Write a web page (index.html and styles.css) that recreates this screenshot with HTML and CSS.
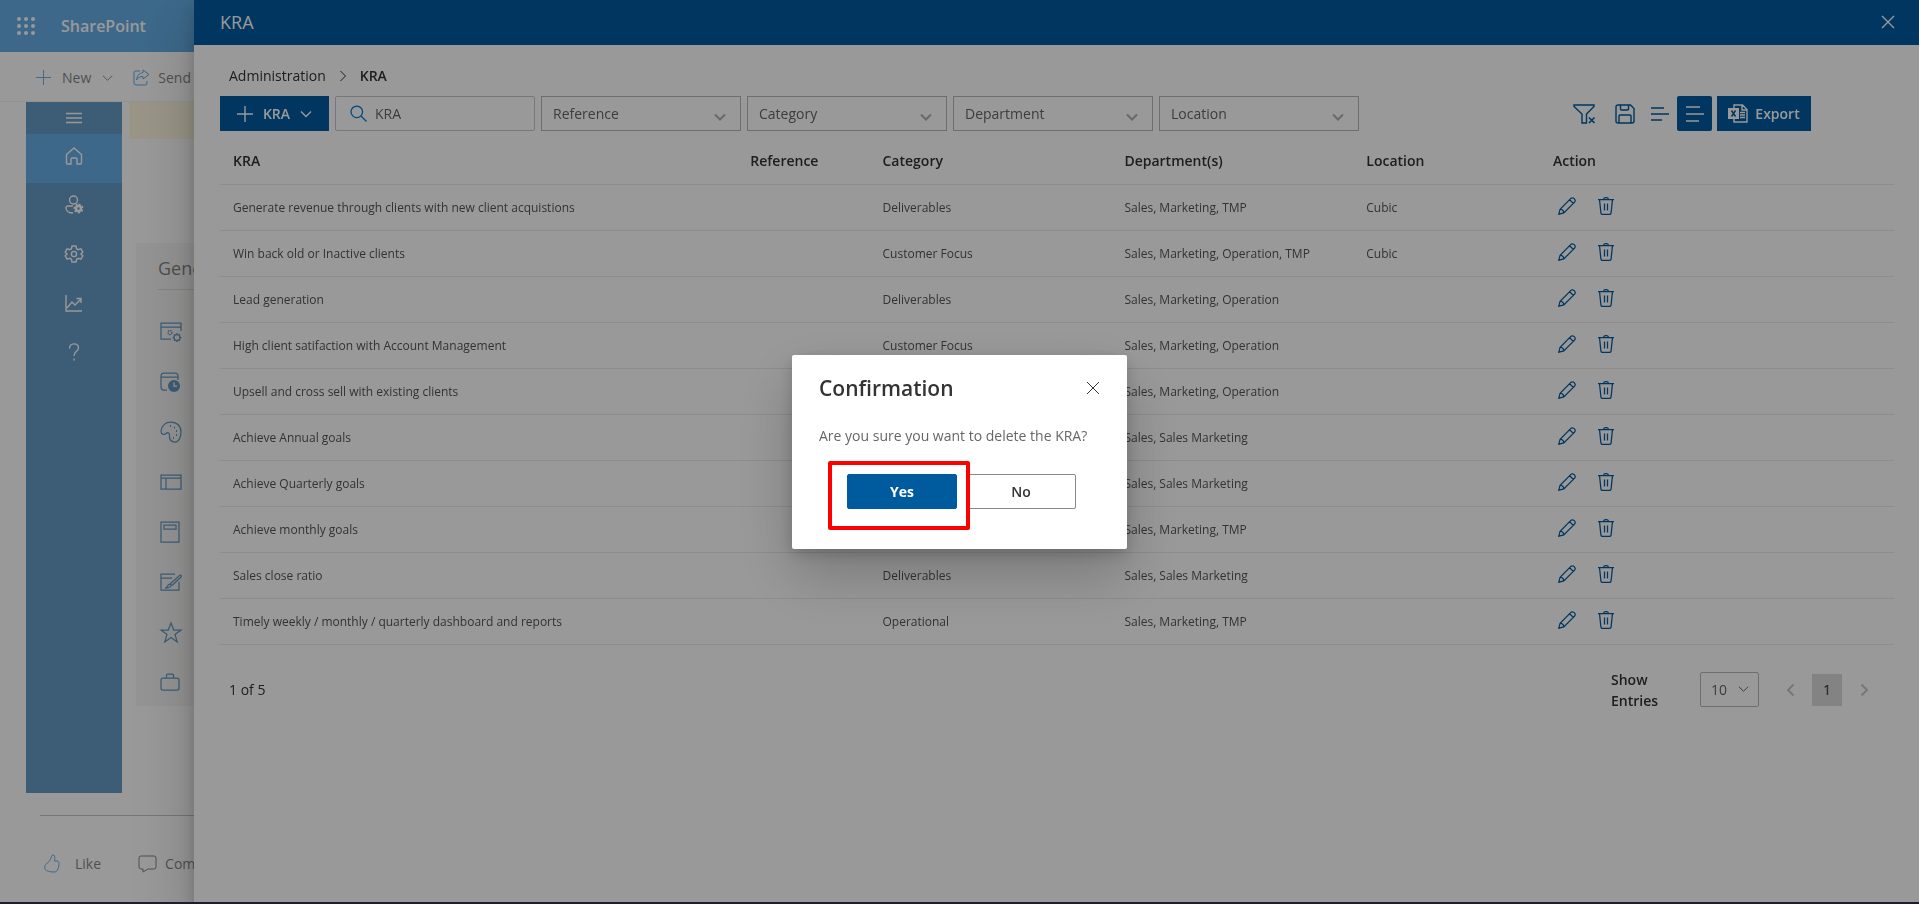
FILE: index.html
```html
<!DOCTYPE html>
<html lang="en">
<head>
<meta charset="utf-8">
<title>KRA</title>
<link rel="stylesheet" href="styles.css">
</head>
<body>
<svg class="defs" aria-hidden="true">
  <symbol id="i-edit" viewBox="0 0 18 18"><path d="M.8 17.2l1.300-5L12.900 1.400a2.100 2.100 0 0 1 3 0l.7.7a2.100 2.100 0 0 1 0 3L5.800 15.900zM11.600 2.700l3.700 3.700M2.100 12.200c2 .2 3.500 1.700 3.700 3.700"/></symbol>
  <symbol id="i-trash" viewBox="0 0 16 18"><path d="M0 2.500h16M5.500 2.500C5.500 1 6.500.6 8 .6s2.500.4 2.500 1.900M1.500 2.500l1.400 13.400c.1 1 .7 1.500 1.600 1.500h7c.9 0 1.500-.5 1.600-1.500L14.500 2.500M6.500 6.500v7M9.500 6.500v7"/></symbol>
  <symbol id="i-down" viewBox="0 0 12 8"><path d="M1 1.500l5 5 5-5"/></symbol>
  <symbol id="i-plus" viewBox="0 0 16 16"><path d="M8 0v16M0 8h16"/></symbol>
  <symbol id="i-close" viewBox="0 0 14 14"><path d="M1 1l12 12M13 1L1 13"/></symbol>
</svg>

<div class="site">
  <header class="suite">
    <button class="plain waffle" aria-label="App launcher"><svg width="18" height="18" viewBox="0 0 18 18"><g fill="#fff"><circle cx="2" cy="2" r="2"/><circle cx="9" cy="2" r="2"/><circle cx="16" cy="2" r="2"/><circle cx="2" cy="9" r="2"/><circle cx="9" cy="9" r="2"/><circle cx="16" cy="9" r="2"/><circle cx="2" cy="16" r="2"/><circle cx="9" cy="16" r="2"/><circle cx="16" cy="16" r="2"/></g></svg></button>
    <span class="brand">SharePoint</span>
  </header>
  <div class="commands">
    <button class="plain command"><svg class="ic blue" width="15" height="15"><use href="#i-plus"/></svg>New<svg class="ic" width="11" height="8"><use href="#i-down"/></svg></button>
    <button class="plain command send"><svg class="ic blue" width="17" height="17" viewBox="0 0 17 17"><path d="M7 2H3Q1 2 1 4v10q0 2 2 2h9q2 0 2-2v-2M10 1l6 4.500L10 10V7.500C7 7.500 5 8.500 3.500 11 4 7 6 4 10 3.700z"/></svg>Send</button>
  </div>
  <div class="work">
    <nav class="rail">
      <button class="plain toggle" aria-label="Menu"><svg class="ic" width="16" height="12" viewBox="0 0 16 12"><path d="M0 1.500h16M0 6h16M0 10.500h16"/></svg></button>
      <a class="railitem active" href="#home" aria-label="Home"><svg class="ic" width="18" height="18" viewBox="0 0 18 18"><path d="M1.500 7.500L9 1l7.500 6.500V16q0 1-1 1H12v-5q0-1-1-1H7q-1 0-1 1v5H2.500q-1 0-1-1z"/></svg></a>
      <a class="railitem" href="#users" aria-label="User settings"><svg class="ic" width="19" height="19" viewBox="0 0 19 19"><circle cx="8.500" cy="5" r="4"/><path d="M8 11H3q-2 0-2 2c0 3 3 5 7 5"/><circle cx="13.500" cy="13.500" r="2.500" stroke-width="2.500"/><path stroke-width="2" stroke-dasharray="2 1.600" d="M13.500 9.500a4 4 0 1 1-.1 0"/></svg></a>
      <a class="railitem" href="#settings" aria-label="Settings"><svg class="ic" width="18" height="18" viewBox="0 0 18 18"><path d="M7 1h4l.6 2.700 1.700 1 2.600-.8 1.900 3.300L15.900 9l1.900 1.800-1.900 3.300-2.600-.8-1.700 1L11 17H7l-.6-2.700-1.700-1-2.600.8L.2 10.800 2.100 9 .2 7.200l1.900-3.300 2.600.8 1.700-1z"/><circle cx="9" cy="9" r="2.600"/></svg></a>
      <a class="railitem" href="#reports" aria-label="Reports"><svg class="ic" width="18" height="18" viewBox="0 0 18 18"><path d="M1 1v16h16M2 14l5-6 3 3 6-6M11.500 4.500H16V9"/></svg></a>
      <a class="railitem" href="#help" aria-label="Help"><svg class="ic" width="12" height="18" viewBox="0 0 12 18"><path d="M1.500 5.500c0-6 9-6 9-.8 0 3.600-4.500 3.800-4.500 8.300M6 15.500v2"/></svg></a>
    </nav>
    <main class="canvas">
      <div class="notice"></div>
      <section class="card">
        <h2 class="cardtitle">General</h2>
        <ul class="tiles">
          <li><svg class="ic" width="22" height="20" viewBox="0 0 22 20"><path d="M11 17H1V1h20v8M1 5h20"/><circle cx="10" cy="10.500" r="2" stroke-dasharray="1.500 .6"/><circle cx="17" cy="15.500" r="3"/><path d="M17 11v1.500M17 18.500V20M12.500 15.500H14M20 15.500h1.500M14 12.500l.8.8M19.200 17.700l.8.800M20 12.500l-.8.800M14.800 17.700l-.8.800"/></svg></li>
          <li><svg class="ic" width="20" height="20" viewBox="0 0 20 20"><path d="M7 18H4q-3 0-3-3V4q0-3 3-3h11q3 0 3 3v4M1 5h17"/><circle cx="14" cy="14" r="6" fill="#005a9e" stroke="none"/><path stroke="#fff" d="M14 10.500V14h3"/></svg></li>
          <li><svg class="ic" width="22" height="22" viewBox="0 0 22 22"><path d="M1 10C2 4 6 1 11 1c6 0 10 4 10 10 0 5-2 10-6 10-5 0-6-4-5.500-7 .2-2-2-3-3.500-1.500S1 14 1 10z"/><path stroke-width="2" d="M10 5h1M14 6.500h1M16 10h1M16 14h1M13 17h1"/></svg></li>
          <li><svg class="ic" width="22" height="16" viewBox="0 0 22 16"><path d="M1 1h20v14H1zM1 4h20M6 4v11"/></svg></li>
          <li><svg class="ic" width="20" height="22" viewBox="0 0 20 22"><path d="M1 1h18v20H1zM4 4h12v4H4z"/></svg></li>
          <li><svg class="ic" width="22" height="18" viewBox="0 0 22 18"><path d="M15 1H1v16h18V9M1 5h11M5 15c3 0 2-4 5-4 2 0 2 4-5 4zM10 11L20 2q2 0 1 2l-9 8.500"/></svg></li>
          <li><svg class="ic" width="22" height="21" viewBox="0 0 22 21"><path d="M11 1l2.700 7H21l-6 4.500 2.200 7.500L11 15.500 4.800 20 7 12.500 1 8h7.300z"/></svg></li>
          <li><svg class="ic" width="20" height="18" viewBox="0 0 20 18"><rect x="1" y="5" width="18" height="12" rx="2"/><path d="M6.500 5V2q0-1 1-1h5q1 0 1 1v3"/></svg></li>
        </ul>
      </section>
    </main>
  </div>
  <footer class="social">
    <button class="plain command"><svg class="ic blue" width="16" height="19" viewBox="0 0 16 19"><path d="M9 1c2 0 2 2 1.500 6H13c3 0 2 4 1 8-.5 2-2 3-4 3-4 0-8-1-9-3-1-4 1-5 3-6.500C6 7 6.500 5 7.500 2.500Q8 1 9 1z"/></svg>Like</button>
    <button class="plain command comment"><svg class="ic" width="19" height="18" viewBox="0 0 19 18"><path d="M3 1h13q2 0 2 2v9q0 2-2 2h-6l-5 3v-3H3q-2 0-2-2V3q0-2 2-2z"/></svg>Comment</button>
  </footer>
</div>
<div class="veil"></div>

<section class="panel" aria-label="KRA">
  <header class="panelhead">
    <h1 class="paneltitle">KRA</h1>
    <button class="plain" aria-label="Close panel"><svg class="ic" width="14" height="14"><use href="#i-close"/></svg></button>
  </header>
  <div class="panelbody">
    <nav class="crumbs"><a href="#admin">Administration</a><svg class="ic" width="8" height="12" viewBox="0 0 8 12"><path d="M1.500 1l5 5-5 5"/></svg><strong>KRA</strong></nav>
    <div class="toolbar">
      <button class="primary add"><svg class="ic" width="16" height="16"><use href="#i-plus"/></svg>KRA<svg class="ic" width="12" height="8"><use href="#i-down"/></svg></button>
      <label class="search"><svg class="ic" width="17" height="17" viewBox="0 0 17 17"><circle cx="6.800" cy="6.800" r="5.800"/><path d="M11 11l5.500 5.500"/></svg><input type="search" placeholder="KRA" aria-label="Search KRA"></label>
      <div class="filter"><select aria-label="Reference"><option>Reference</option></select><svg class="ic" width="12" height="8"><use href="#i-down"/></svg></div>
      <div class="filter"><select aria-label="Category"><option>Category</option></select><svg class="ic" width="12" height="8"><use href="#i-down"/></svg></div>
      <div class="filter"><select aria-label="Department"><option>Department</option></select><svg class="ic" width="12" height="8"><use href="#i-down"/></svg></div>
      <div class="filter"><select aria-label="Location"><option>Location</option></select><svg class="ic" width="12" height="8"><use href="#i-down"/></svg></div>
      <div class="tools">
        <button class="plain" aria-label="Clear filter"><svg class="ic" width="22" height="20" viewBox="0 0 22 20"><path d="M1 1h20v1.500l-7.500 7.500v9H9v-9L1 2.500z"/><path stroke-width="1.600" d="M16 13.500l5.500 5.500M21.500 13.500L16 19"/></svg></button>
        <button class="plain save" aria-label="Save"><svg class="ic" width="20" height="20" viewBox="0 0 20 20"><path d="M3 1h12.500L19 4.500V17q0 2-2 2H3q-2 0-2-2V3q0-2 2-2zM5.500 1v4q0 1 1 1h6q1 0 1-1V1M4 19v-7q0-1 1-1h10q1 0 1 1v7"/></svg></button>
        <button class="plain lines" aria-label="Compact view"><svg class="ic" width="18" height="14" viewBox="0 0 18 14"><path d="M0 1h13M0 7h18M0 13h11"/></svg></button>
        <button class="primary square" aria-label="Normal view"><svg class="ic" width="18" height="16" viewBox="0 0 18 16"><path d="M0 1h14M0 8h18M0 15h13"/></svg></button>
        <button class="primary export"><svg class="ic" width="20" height="19" viewBox="0 0 20 19"><path d="M6 4V1h8.500L19 5.500V18H6v-3M14 1v5h5M12 8.500h5M12 11h5M12 13.500h5"/><path fill="#fff" stroke="none" d="M0 4h11v11H0z"/><path stroke="#005a9e" stroke-width="1.500" d="M3.500 6.500l4 6M7.500 6.500l-4 6"/></svg>Export</button>
      </div>
    </div>
    <table class="grid">
      <colgroup><col class="c-kra"><col class="c-ref"><col class="c-cat"><col class="c-cat"><col class="c-loc"><col></colgroup>
      <thead><tr><th>KRA</th><th>Reference</th><th>Category</th><th>Department(s)</th><th>Location</th><th>Action</th></tr></thead>
      <tbody>
        <tr><td>Generate revenue through clients with new client acquistions</td><td></td><td>Deliverables</td><td>Sales, Marketing, TMP</td><td>Cubic</td><td><button class="plain act" aria-label="Edit"><svg class="ic" width="18" height="18"><use href="#i-edit"/></svg></button><button class="plain act" aria-label="Delete"><svg class="ic" width="16" height="18"><use href="#i-trash"/></svg></button></td></tr>
        <tr><td>Win back old or Inactive clients</td><td></td><td>Customer Focus</td><td>Sales, Marketing, Operation, TMP</td><td>Cubic</td><td><button class="plain act" aria-label="Edit"><svg class="ic" width="18" height="18"><use href="#i-edit"/></svg></button><button class="plain act" aria-label="Delete"><svg class="ic" width="16" height="18"><use href="#i-trash"/></svg></button></td></tr>
        <tr><td>Lead generation</td><td></td><td>Deliverables</td><td>Sales, Marketing, Operation</td><td></td><td><button class="plain act" aria-label="Edit"><svg class="ic" width="18" height="18"><use href="#i-edit"/></svg></button><button class="plain act" aria-label="Delete"><svg class="ic" width="16" height="18"><use href="#i-trash"/></svg></button></td></tr>
        <tr><td>High client satifaction with Account Management</td><td></td><td>Customer Focus</td><td>Sales, Marketing, Operation</td><td></td><td><button class="plain act" aria-label="Edit"><svg class="ic" width="18" height="18"><use href="#i-edit"/></svg></button><button class="plain act" aria-label="Delete"><svg class="ic" width="16" height="18"><use href="#i-trash"/></svg></button></td></tr>
        <tr><td>Upsell and cross sell with existing clients</td><td></td><td></td><td>Sales, Marketing, Operation</td><td></td><td><button class="plain act" aria-label="Edit"><svg class="ic" width="18" height="18"><use href="#i-edit"/></svg></button><button class="plain act" aria-label="Delete"><svg class="ic" width="16" height="18"><use href="#i-trash"/></svg></button></td></tr>
        <tr><td>Achieve Annual goals</td><td></td><td></td><td>Sales, Sales Marketing</td><td></td><td><button class="plain act" aria-label="Edit"><svg class="ic" width="18" height="18"><use href="#i-edit"/></svg></button><button class="plain act" aria-label="Delete"><svg class="ic" width="16" height="18"><use href="#i-trash"/></svg></button></td></tr>
        <tr><td>Achieve Quarterly goals</td><td></td><td></td><td>Sales, Sales Marketing</td><td></td><td><button class="plain act" aria-label="Edit"><svg class="ic" width="18" height="18"><use href="#i-edit"/></svg></button><button class="plain act" aria-label="Delete"><svg class="ic" width="16" height="18"><use href="#i-trash"/></svg></button></td></tr>
        <tr><td>Achieve monthly goals</td><td></td><td></td><td>Sales, Marketing, TMP</td><td></td><td><button class="plain act" aria-label="Edit"><svg class="ic" width="18" height="18"><use href="#i-edit"/></svg></button><button class="plain act" aria-label="Delete"><svg class="ic" width="16" height="18"><use href="#i-trash"/></svg></button></td></tr>
        <tr><td>Sales close ratio</td><td></td><td>Deliverables</td><td>Sales, Sales Marketing</td><td></td><td><button class="plain act" aria-label="Edit"><svg class="ic" width="18" height="18"><use href="#i-edit"/></svg></button><button class="plain act" aria-label="Delete"><svg class="ic" width="16" height="18"><use href="#i-trash"/></svg></button></td></tr>
        <tr><td>Timely weekly / monthly / quarterly dashboard and reports</td><td></td><td>Operational</td><td>Sales, Marketing, TMP</td><td></td><td><button class="plain act" aria-label="Edit"><svg class="ic" width="18" height="18"><use href="#i-edit"/></svg></button><button class="plain act" aria-label="Delete"><svg class="ic" width="16" height="18"><use href="#i-trash"/></svg></button></td></tr>
      </tbody>
    </table>
    <div class="pager">
      <span class="count">1 of 5</span>
      <label class="showlabel" for="entries">Show Entries</label>
      <div class="filter entries"><select id="entries"><option>10</option></select><svg class="ic" width="11" height="8"><use href="#i-down"/></svg></div>
      <button class="plain step" aria-label="Previous page"><svg class="ic" width="9" height="14" viewBox="0 0 9 14"><path d="M7.500 1.500L2 7l5.500 5.500"/></svg></button>
      <button class="plain current">1</button>
      <button class="plain step" aria-label="Next page"><svg class="ic" width="9" height="14" viewBox="0 0 9 14"><path d="M1.500 1.500L7 7l-5.500 5.500"/></svg></button>
    </div>
  </div>
</section>

<div class="scrim">
  <div class="dialog" role="dialog" aria-modal="true" aria-labelledby="dlg-title">
    <div class="dialoghead">
      <h2 id="dlg-title" class="dialogtitle">Confirmation</h2>
      <button class="plain" aria-label="Close"><svg class="ic" width="14" height="14"><use href="#i-close"/></svg></button>
    </div>
    <p class="message">Are you sure you want to delete the KRA?</p>
    <div class="choices">
      <button class="choice yes">Yes</button>
      <button class="choice no">No</button>
      <span class="marker"></span>
    </div>
  </div>
</div>
<div class="taskbar"></div>
</body>
</html>
```
FILE: styles.css
```css
* { box-sizing: border-box; }
body {
  margin: 0;
  height: 100vh;
  overflow: hidden;
  background: #fff;
  color: #333;
  font: 14px/20px "Open Sans", "Noto Sans", sans-serif;
}
button, input, select { font: inherit; color: inherit; }
.defs { position: absolute; width: 0; height: 0; }
.ic { display: block; flex: none; fill: none; stroke: currentColor; overflow: visible; }
.blue { color: #0078d4; }
.plain { display: flex; align-items: center; padding: 0; border: 0; background: none; }

/* site behind the panel */
.suite { display: flex; align-items: center; height: 52px; padding-left: 17px; background: #0078d4; color: #fff; }
.brand { margin-left: 26px; font-size: 16px; font-weight: 600; }
.commands { display: flex; align-items: center; height: 50px; padding: 2px 0 0 36px; border-bottom: 1px solid #edebe9; white-space: nowrap; }
.command { gap: 11px; color: #333; }
.send { margin-left: 20px; gap: 8px; }
.work { display: flex; align-items: stretch; gap: 7px; margin-left: 26px; }
.rail { display: flex; flex-direction: column; flex: none; width: 96px; min-height: 691px; background: #005a9e; color: #fff; stroke-width: 1.400; }
.toggle { justify-content: center; height: 32px; }
.railitem { display: flex; align-items: center; justify-content: center; height: 49px; padding-bottom: 6px; color: inherit; }
.active { background: #0078d4; }
.canvas { flex: 1; }
.notice { height: 37px; background: #fff4ce; }
.card { margin: 104px 8px 0 7px; padding: 12px 22px 0; background: #f3f2f1; height: 463px; }
.cardtitle { margin: 0; padding-bottom: 7px; border-bottom: 1px solid #c8c6c4; font-size: 18px; line-height: 27px; font-weight: 400; }
.tiles { margin: 0; padding: 17px 0 0 1px; list-style: none; color: #005a9e; stroke-width: 1.250; }
.tiles li { display: flex; align-items: center; height: 50px; }
.tiles svg { margin: 0 1px; }
.social { display: flex; align-items: center; margin: 22px 0 0 40px; padding-left: 4px; height: 96px; border-top: 1px solid #a19f9d; }
.social .command { gap: 15px; }
.social .comment { margin-left: 37px; gap: 8px; }
.veil { position: fixed; inset: 0; background: rgba(255, 255, 255, .4); }

/* panel */
.panel { position: fixed; inset: 0 0 0 194px; background: #fff; box-shadow: 0 26px 58px rgba(0, 0, 0, .22), 0 5px 15px rgba(0, 0, 0, .18); }
.panelhead { display: flex; align-items: center; justify-content: space-between; height: 45px; padding: 0 24px 2px 26px; background: #005a9e; color: #fff; }
.panelhead .ic { stroke-width: 1.400; }
.paneltitle { margin: 0; font-size: 18px; font-weight: 400; }
.panelbody { padding: 21px 25px 0 26px; }
.crumbs { display: flex; align-items: center; gap: 13px; padding: 0 9px 10px; }
.crumbs a { color: #333; text-decoration: none; }
.crumbs strong { font-weight: 600; }
.toolbar { display: flex; align-items: center; gap: 6px; padding-right: 83px; }
.primary { display: flex; align-items: center; justify-content: center; height: 35px; padding: 0; border: 0; background: #005a9e; color: #fff; font-weight: 600; }
.primary .ic { stroke-width: 1.400; }
.add { width: 109px; gap: 10px; }
.search, .filter { display: flex; align-items: center; width: 200px; height: 35px; border: 1px solid #c8c6c4; }
.search { gap: 8px; padding-left: 14px; border-radius: 2px; }
.search .ic { color: #0078d4; stroke-width: 1.250; }
.search input { width: 100%; min-width: 0; border: 0; outline: 0; padding: 0; background: none; }
.search input::placeholder { color: #666; opacity: 1; }
.filter { position: relative; border-color: #b8b8b8; color: #666; }
.filter select { width: 100%; height: 100%; padding: 0 11px; border: 0; background: none; appearance: none; }
.filter .ic { position: absolute; right: 14px; bottom: 9px; color: #b0b0b0; stroke-width: 2; pointer-events: none; }
.tools { display: flex; align-items: center; margin-left: auto; color: #005a9e; stroke-width: 1.400; }
.tools .save { margin: 0 16px 0 20px; }
.lines { margin-right: 8px; }
.square { width: 35px; margin-right: 5px; border-radius: 2px; }
.export { width: 94px; gap: 7px; }

.grid { width: 100%; border-collapse: collapse; table-layout: fixed; }
.c-kra { width: 30.9%; }
.c-ref { width: 7.9%; }
.c-cat { width: 14.45%; }
.c-loc { width: 11.15%; }
.grid th, .grid td { padding: 0 13px; border-bottom: 1px solid #edebe9; text-align: left; white-space: nowrap; }
.grid th { height: 53px; padding-top: 7px; font-weight: 600; }
.grid td { height: 46px; padding-top: 1px; font-size: 12px; color: #555; }
.act { display: inline-flex; width: 25px; margin: 0 10px 3px 5px; color: #005a9e; stroke-width: 1.250; vertical-align: middle; }

.pager { display: flex; align-items: center; padding: 24px 8px 0 9px; }
.count { margin-right: auto; }
.showlabel { width: 50px; margin-right: 39px; line-height: 21px; font-weight: 600; }
.entries { width: 59px; margin-right: 9px; border-radius: 2px; }
.entries select { padding: 0 10px; }
.entries .ic { right: 9px; bottom: 13px; color: #555; stroke-width: 1; }
.step { width: 44px; justify-content: center; color: #c8c6c4; stroke-width: 2; }
.current { width: 30px; height: 32px; justify-content: center; background: #dadada; }

/* dialog */
.scrim { position: fixed; inset: 0; display: flex; align-items: center; justify-content: center; background: rgba(0, 0, 0, .4); }
.dialog { min-width: 335px; padding: 19px 27px 40px; border-radius: 2px; background: #fff; box-shadow: 0 26px 58px rgba(0, 0, 0, .22), 0 5px 15px rgba(0, 0, 0, .18); }
.dialoghead { display: flex; align-items: center; justify-content: space-between; }
.dialogtitle { margin: 0; font-size: 21px; line-height: 28px; font-weight: 600; }
.message { margin: 24px 0 28px; color: #666; }
.choices { position: relative; display: flex; justify-content: center; gap: 9px; padding-left: 4px; }
.choice { width: 110px; height: 35px; padding: 0; border: 1px solid #8a8886; border-radius: 2px; background: #fff; font-weight: 600; }
.yes { border-color: #005a9e; background: #005a9e; color: #fff; font-weight: 700; }
.marker { position: absolute; left: 9px; top: -13px; width: 142px; height: 69px; border: 4px solid #f00; border-radius: 2px; pointer-events: none; }
.taskbar { position: fixed; inset: auto 0 0; height: 2px; background: #1e1e2c; }
```
